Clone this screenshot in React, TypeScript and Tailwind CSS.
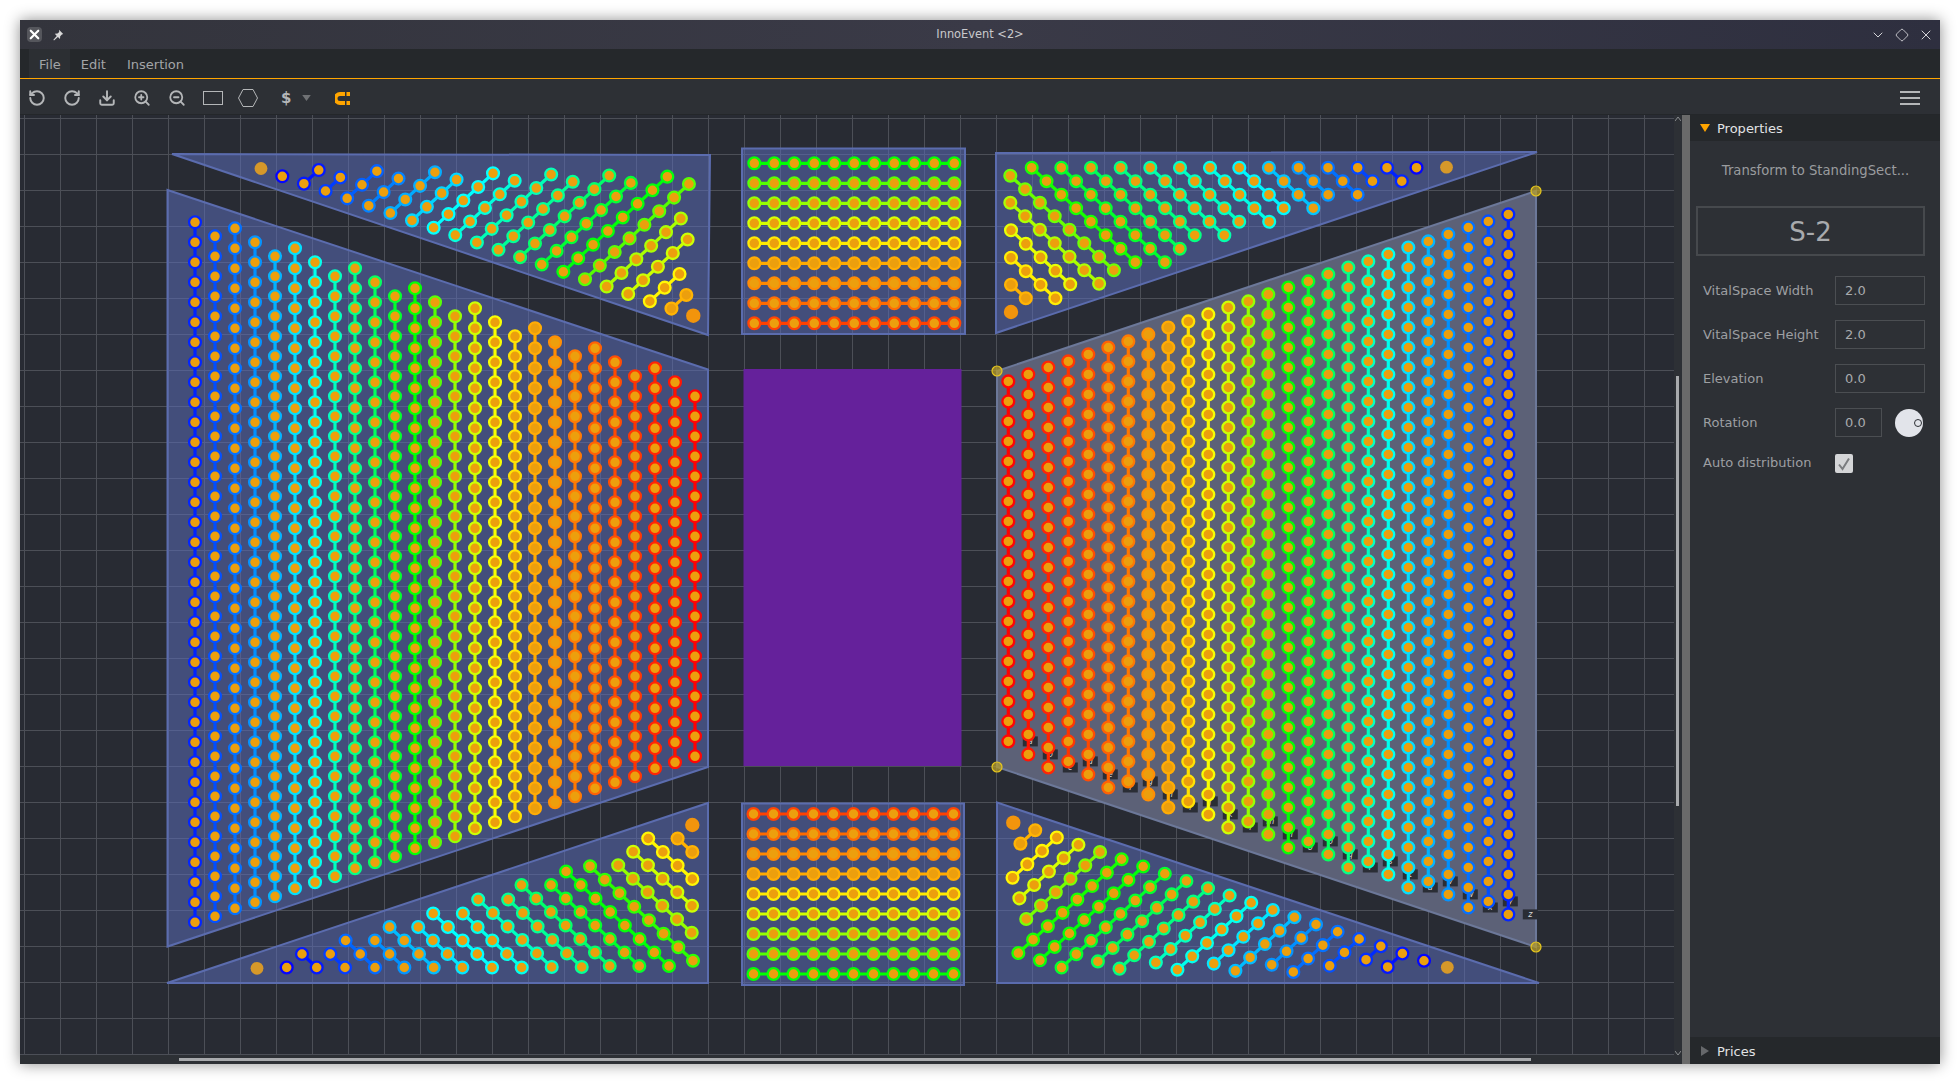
import { ChevronDown, Diamond, Download, RotateCcw, RotateCw, X, ZoomIn, ZoomOut } from "lucide-react"

type Pt = [number, number]
interface SeatRow {
  pts: Pt[]
  hue: number
}

// canvas drawing uses page coordinates, the viewBox is offset to match
const GRID_X = Array.from({ length: 46 }, (_, i) => 24.5 + i * 36)
const GRID_Y = Array.from({ length: 27 }, (_, i) => 118.5 + i * 36)

const COL_HUES = [232, 222, 214, 206, 198, 188, 176, 165, 152, 142, 130, 120, 100, 85, 72, 62, 53, 40, 33, 28, 22, 17, 12, 8, 4, 0]

function column(x: number, phase: number, top: number, bottom: number): Pt[] {
  const pts: Pt[] = []
  let y = phase + Math.ceil((top - phase) / 20) * 20
  while (y <= bottom) {
    pts.push([x, y])
    y += 20
  }
  return pts
}

const leftBig: SeatRow[] = COL_HUES.map((hue, k) => {
  const x = 195 + 20 * k
  const off = (x - 167) / 3
  return { hue, pts: column(x, [2.3, 16.3, 8.3][k % 3], 190 + off + 15, 946.7 - off - 14) }
})

const rightBig: SeatRow[] = COL_HUES.map((_, c) => {
  const x = 1008.3 + 20 * c
  const off = (x - 997) / 3
  const k = 25 - c
  return { hue: COL_HUES[k], pts: column(x, [14.4, 1.4, 7.5][k % 3], 370 - off + 14, 767 + off - 16) }
})

function line(x: number, y: number, dx: number, dy: number, len: number): Pt[] {
  return Array.from({ length: len }, (_, j): Pt => [x + dx * j, y + dy * j])
}

// top left wedge, rows climbing to the right
const TL_LENS = [1, 2, 2, 3, 3, 4, 4, 5, 5, 6, 6, 7, 7, 8, 8, 6, 5, 3, 2]
const TL_HUES = [240, 235, 226, 218, 210, 200, 190, 180, 172, 163, 155, 145, 132, 122, 100, 80, 72, 58, 42]
const topLeft: SeatRow[] = TL_LENS.map((len, i) => ({
  hue: TL_HUES[i],
  pts: line(282.3 + 21.62 * i, 176.3 + 7.35 * i, 14.85, -13.6, len),
}))

// top right wedge, rows falling to the right
const TR_ROWS: [number, number, number, number][] = [
  [1011, 284.7, 2, 42],
  [1011, 257.7, 4, 56],
  [1011, 230.3, 5, 66],
  [1010.3, 202.7, 7, 80],
  [1010.3, 175.7, 8, 95],
  [1031.7, 167.7, 8, 115],
  [1061.3, 167.7, 8, 130],
  [1091, 167.7, 7, 140],
  [1120.7, 167.7, 6, 150],
  [1150.3, 167.7, 6, 160],
  [1180, 167.7, 5, 166],
  [1210, 167.7, 5, 174],
  [1239.3, 167.7, 4, 182],
  [1268.9, 167.7, 4, 194],
  [1298.5, 167.7, 3, 205],
  [1328, 167.7, 3, 214],
  [1357.7, 167.7, 2, 224],
  [1387, 167.7, 2, 232],
  [1416.5, 167.7, 1, 240],
]
const topRight: SeatRow[] = TR_ROWS.map(([x, y, len, hue]) => ({ hue, pts: line(x, y, 14.8, 13.5, len) }))

// bottom left wedge, each row given by its lower right seat
const BL_ROWS: [number, number, number, number][] = [
  [286.7, 967.5, 1, 240],
  [316.7, 967.5, 2, 235],
  [345, 967.5, 2, 226],
  [375, 967.5, 3, 216],
  [404.3, 967.5, 3, 206],
  [433.7, 967.5, 4, 196],
  [462.3, 967.5, 4, 186],
  [492, 967.5, 5, 180],
  [521.7, 967.5, 5, 175],
  [551.7, 967, 6, 165],
  [581.7, 967, 6, 155],
  [609.7, 966, 7, 145],
  [639.3, 966, 7, 130],
  [669, 966, 8, 122],
  [693, 960.7, 8, 110],
  [691.7, 932.7, 6, 85],
  [692, 905.7, 5, 72],
  [692.3, 879, 4, 58],
  [692.3, 852, 2, 42],
]
const bottomLeft: SeatRow[] = BL_ROWS.map(([x, y, len, hue]) => ({ hue, pts: line(x, y, -14.7, -13.5, len) }))

// bottom right wedge, rows given by upper right seat
const BR_LENS = [2, 4, 5, 6, 8, 8, 8, 7, 7, 6, 6, 5, 5, 4, 4, 3, 2, 2, 1]
const BR_HUES = [42, 58, 70, 92, 115, 122, 130, 140, 150, 165, 176, 186, 196, 206, 214, 222, 230, 236, 240]
const bottomRight: SeatRow[] = BR_LENS.map((len, i) => ({
  hue: BR_HUES[i],
  pts: line(1035.2 + 21.6 * i, 830.25 + 7.25 * i, -14.75, 13.4, len),
}))

const MID_HUES = [120, 100, 85, 70, 55, 40, 32, 25, 15]
const midTop: SeatRow[] = MID_HUES.map((hue, r) => ({ hue, pts: line(754.3, 163.3 + 20 * r, 20, 0, 11) }))
const midBottom: SeatRow[] = [...MID_HUES].reverse().map((hue, r) => ({ hue, pts: line(753.5, 814 + 20 * r, 20, 0, 11) }))

// lone seats with no ring, the gold ones sit at the blue end of the wedges
const FADED_GOLD: Pt[] = [
  [261, 168.5],
  [1446.5, 167.2],
  [257, 968.3],
  [1447.3, 967.3],
]
const FADED_ORANGE: Pt[] = [
  [693.3, 315.7],
  [1011, 312],
  [692.3, 825],
  [1013.3, 822.7],
]

const SECTIONS = [
  "172,154 710,155 708,335",
  "167.5,190 708,369.5 708,767 167.5,946.5",
  "742,148.5 965,148.5 965,334 742,334",
  "996,153 1537,152 996,333",
  "167,983 708,803 708,983",
  "742,803.5 964,803.5 964,985 742,985",
  "997,802.5 1539,983 997,983",
]

const HANDLES: Pt[] = [
  [1536, 191],
  [997, 371],
  [997, 767],
  [1536, 947],
]

function Seats({ rows }: { rows: SeatRow[] }) {
  return (
    <g>
      {rows.map((row, i) => (
        <g key={i}>
          {row.pts.length > 1 && (
            <polyline
              points={row.pts.map((p) => p.join(",")).join(" ")}
              fill="none"
              stroke={`hsl(${row.hue} 100% 50%)`}
              strokeWidth={3.2}
            />
          )}
          {row.pts.map(([x, y], j) => (
            <circle key={j} cx={x} cy={y} r={5.9} fill="#ec9f0d" stroke={`hsl(${row.hue} 100% 51%)`} strokeWidth={2.3} />
          ))}
        </g>
      ))}
    </g>
  )
}

function Canvas() {
  return (
    <svg viewBox="20 115 1654 940" className="block w-[1654px] h-[940px] shrink-0">
      <rect x={20} y={115} width={1654} height={940} fill="#282b33" />
      {GRID_X.map((x) => (
        <line key={x} x1={x} x2={x} y1={115} y2={1055} stroke="#4c4f57" strokeWidth={1} />
      ))}
      {GRID_Y.map((y) => (
        <line key={y} x1={20} x2={1674} y1={y} y2={y} stroke="#4c4f57" strokeWidth={1} />
      ))}
      {SECTIONS.map((pts) => (
        <polygon key={pts} points={pts} fill="rgba(92,112,190,0.52)" stroke="#5b6cae" strokeWidth={2} />
      ))}
      <rect x={743.5} y={369} width={218} height={397} fill="#65219b" />
      <polygon points="997,371 1536,191 1536,947 997,767" fill="#5c6177" stroke="#6c7899" strokeWidth={2} />
      {FADED_GOLD.map(([x, y]) => (
        <circle key={`${x}-${y}`} cx={x} cy={y} r={6.4} fill="#d6982a" />
      ))}
      {FADED_ORANGE.map(([x, y]) => (
        <circle key={`${x}-${y}`} cx={x} cy={y} r={7.2} fill="#f2940c" />
      ))}
      {rightBig.map((row, c) => {
        const last = row.pts[row.pts.length - 1]
        return (
          <g key={c}>
            <rect x={last[0] + 14.5} y={last[1] - 5} width={15} height={10} fill="#2a2d35" />
            <text
              x={last[0] + 22}
              y={last[1] + 2.5}
              textAnchor="middle"
              fill="#d8d8d8"
              fontSize={8}
              fontStyle="italic"
              fontFamily="'DejaVu Sans', sans-serif"
            >
              {String.fromCharCode(97 + c)}
            </text>
          </g>
        )
      })}
      <Seats rows={leftBig} />
      <Seats rows={rightBig} />
      <Seats rows={topLeft} />
      <Seats rows={topRight} />
      <Seats rows={bottomLeft} />
      <Seats rows={bottomRight} />
      <Seats rows={midTop} />
      <Seats rows={midBottom} />
      {HANDLES.map(([x, y]) => (
        <circle key={`${x}-${y}`} cx={x} cy={y} r={5} fill="#b59c2a" fillOpacity={0.75} stroke="#e8c81c" strokeWidth={1.2} />
      ))}
    </svg>
  )
}

function TitleBar() {
  return (
    <div className="relative h-[29px] shrink-0 flex items-center justify-between pl-[7px] pr-[6px] bg-gradient-to-r from-[#33343c] via-[#3a3a47] to-[#2e2f3f]">
      <div className="flex items-center gap-[10px]">
        <div className="w-[15px] h-[15px] rounded-[4px] bg-[#55565c] flex items-center justify-center">
          <X className="w-[15px] h-[15px] text-white" strokeWidth={3.5} />
        </div>
        <svg viewBox="0 0 12 12" className="w-[12px] h-[12px] text-[#d8d8d8]" fill="currentColor">
          <path d="M7 0.8 11.2 5 9.9 5.6 8.2 7.3 8 10 5.9 8 2 11.4 1.4 10.8 4.8 6.9 2.8 4.8 5.5 4.6 7.2 2.9Z" />
        </svg>
      </div>
      <span className="absolute left-0 right-0 text-center text-[11.4px] text-[#c9c9cc]">InnoEvent &lt;2&gt;</span>
      <div className="flex items-center gap-[8px] text-[#d4d4d8]">
        <ChevronDown className="w-[16px] h-[16px]" strokeWidth={1.5} />
        <Diamond className="w-[14px] h-[14px] mx-[1px]" strokeWidth={1.5} />
        <X className="w-[16px] h-[16px]" strokeWidth={1.5} />
      </div>
    </div>
  )
}

function MenuBar() {
  return (
    <div className="h-[30px] shrink-0 flex items-stretch pl-[9px] bg-[#25282b] border-b-[1px] border-[#ffa500] text-[13px] text-[#a3a5a8]">
      <span className="flex items-center pl-[10px] pr-[9px] pt-[2px] bg-[#2c2f33]">File</span>
      <span className="flex items-center pl-[11px] pr-[10px] pt-[2px]">Edit</span>
      <span className="flex items-center px-[11px] pt-[2px]">Insertion</span>
    </div>
  )
}

function ToolBar() {
  const icon = "w-[18px] h-[18px] text-[#b4b6b8]"
  return (
    <div className="h-[36px] shrink-0 flex items-center pl-[8px] pr-[20px] pt-[3px] bg-[#2d3035] border-b-[1px] border-[#24272a]">
      <div className="flex items-center gap-[17px]">
        <RotateCcw className={icon} strokeWidth={2.6} />
        <RotateCw className={icon} strokeWidth={2.6} />
        <Download className={icon} strokeWidth={2.6} />
        <ZoomIn className={icon} strokeWidth={2.4} />
        <ZoomOut className={icon} strokeWidth={2.4} />
      </div>
      <div className="ml-[17px] w-[20px] h-[14px] border-[1px] border-[#b4b6b8]" />
      <svg viewBox="0 0 20 18" className="ml-[15px] w-[20px] h-[18px] text-[#b4b6b8]" fill="none" stroke="currentColor">
        <path d="M5 0.5H15L19.5 9 15 17.5H5L0.5 9Z" />
      </svg>
      <span className="ml-[23px] w-[10px] text-[15px] font-bold text-[#b4b6b8] leading-none">$</span>
      <svg viewBox="0 0 10 7" className="ml-[11px] w-[9px] h-[6px]">
        <path d="M0 0H10L5 7Z" fill="#6f7174" />
      </svg>
      <svg viewBox="0 0 15 13" className="ml-[24px] w-[15px] h-[13px]">
        <path d="M5 0H10V4H5A2.5 2.5 0 0 0 5 9H10V13H5A6.5 6.5 0 0 1 5 0ZM11.5 0H15V4H11.5ZM11.5 9H15V13H11.5Z" fill="#ffa500" />
      </svg>
      <div className="ml-auto flex flex-col gap-[4px]">
        <div className="w-[20px] h-[2px] bg-[#b4b6b8]" />
        <div className="w-[20px] h-[2px] bg-[#b4b6b8]" />
        <div className="w-[20px] h-[2px] bg-[#b4b6b8]" />
      </div>
    </div>
  )
}

function Field({ label, value }: { label: string; value: string }) {
  return (
    <div className="flex items-center h-[29px]">
      <span className="w-[132px] pt-[1px] text-[#9d9fa2]">{label}</span>
      <div className="w-[90px] h-[29px] border-[1px] border-[#4b4e52] flex items-center pl-[9px] pt-[1px] text-[#a8aaad]">{value}</div>
    </div>
  )
}

function Properties() {
  return (
    <div className="w-[250px] shrink-0 flex flex-col bg-[#2d3035] text-[13px]">
      <div className="h-[26px] shrink-0 flex items-center pl-[10px] bg-[#25282b] text-[#e2e3e5]">
        <svg viewBox="0 0 10 8" className="w-[10px] h-[8px] mr-[7px]">
          <path d="M0 0H10L5 8Z" fill="#ffa500" />
        </svg>
        <span className="pt-[2px]">Properties</span>
      </div>
      <div className="flex-1 flex flex-col pl-[6px] pr-[15px]">
        <div className="h-[29px] mt-[15px] pl-[10px] text-center text-[13.2px] text-[#9a9c9f] leading-[29px]">Transform to StandingSect...</div>
        <div className="h-[50px] mt-[21px] pt-[2px] border-[2px] border-[#46494d] flex items-center justify-center text-[26px] text-[#a8aaad]">S-2</div>
        <div className="mt-[20px] pl-[7px] flex flex-col gap-[15px]">
          <Field label="VitalSpace Width" value="2.0" />
          <Field label="VitalSpace Height" value="2.0" />
          <Field label="Elevation" value="0.0" />
          <div className="flex items-center h-[29px]">
            <span className="w-[132px] pt-[1px] text-[#9d9fa2]">Rotation</span>
            <div className="w-[47px] h-[29px] border-[1px] border-[#4b4e52] flex items-center pl-[9px] pt-[1px] text-[#a8aaad]">0.0</div>
            <div className="relative ml-[13px] w-[28px] h-[28px] rounded-full bg-[#e2e4ea]">
              <div className="absolute right-[1px] top-[10px] w-[8px] h-[8px] rounded-full bg-[#e2e4ea] border-[1.5px] border-[#2d3035]" />
            </div>
          </div>
          <div className="flex items-center mt-[2px] h-[19px]">
            <span className="w-[132px] text-[#9d9fa2] -mt-[1px]">Auto distribution</span>
            <div className="w-[18px] h-[19px] rounded-[2px] bg-[#d4d5d7] flex items-center justify-center">
              <svg viewBox="0 0 14 14" className="w-[14px] h-[14px]" fill="none" stroke="#7a7c7f" strokeWidth={2}>
                <path d="M2 7.5 5.5 12 12 1.5" />
              </svg>
            </div>
          </div>
        </div>
      </div>
      <div className="h-[27px] shrink-0 flex items-center pl-[11px] bg-[#25282b] text-[#e2e3e5]">
        <svg viewBox="0 0 8 10" className="w-[8px] h-[10px] mr-[8px]">
          <path d="M0 0V10L8 5Z" fill="#66686b" />
        </svg>
        <span className="pt-[2px]">Prices</span>
      </div>
    </div>
  )
}

export default function App() {
  return (
    <div className="w-[1960px] h-[1084px] bg-white p-[20px] font-['DejaVu_Sans',sans-serif]">
      <div className="w-[1920px] h-[1044px] flex flex-col overflow-hidden shadow-[0_0_14px_rgba(0,0,0,0.45)]">
        <TitleBar />
        <MenuBar />
        <ToolBar />
        <div className="flex-1 flex min-h-0">
          <div className="w-[1662px] flex flex-col bg-[#2d3035]">
            <div className="flex h-[940px]">
              <Canvas />
              <div className="relative w-[8px] bg-[#2d3035]">
                <div className="absolute left-[2px] top-[261px] w-[3px] h-[430px] bg-[#a8aaad]" />
                <svg viewBox="0 0 6 4" className="absolute left-[1px] top-[2px] w-[6px] h-[4px]">
                  <path d="M0 4 3 0 6 4" fill="none" stroke="#8a8c8f" />
                </svg>
                <svg viewBox="0 0 6 4" className="absolute left-[1px] bottom-[0px] w-[6px] h-[4px]">
                  <path d="M0 0 3 4 6 0" fill="none" stroke="#8a8c8f" />
                </svg>
              </div>
            </div>
            <div className="relative flex-1">
              <div className="absolute left-[159px] top-[3px] w-[1352px] h-[3px] bg-[#a8aaad]" />
            </div>
          </div>
          <div className="w-[8px] shrink-0 bg-[#6a6a6a]" />
          <Properties />
        </div>
      </div>
    </div>
  )
}
